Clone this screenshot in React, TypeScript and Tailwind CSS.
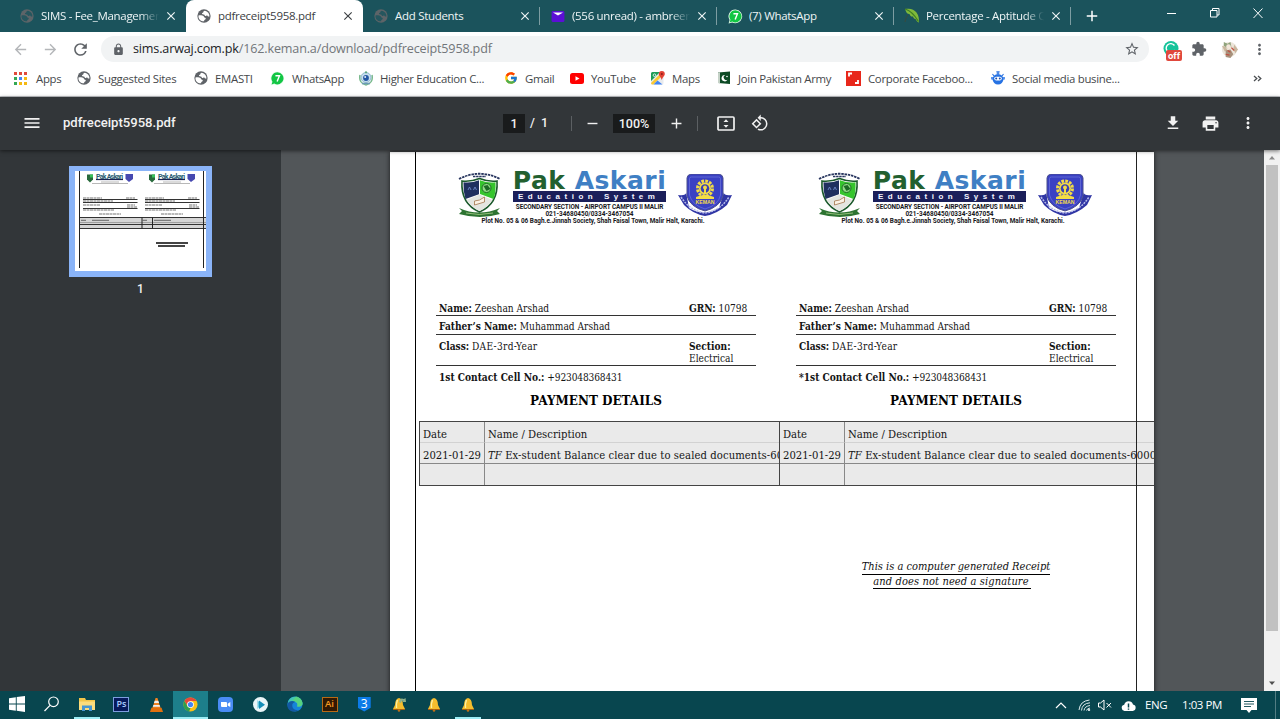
import type { ReactNode } from 'react';
import {
  MdAdd, MdArrowBack, MdArrowForward, MdClose, MdExtension, MdFileDownload, MdLock, MdMenu,
  MdMoreVert, MdPrint, MdRefresh, MdRemove, MdRotate90DegreesCcw, MdStarBorder,
} from 'react-icons/md';
import { FcGoogle } from 'react-icons/fc';

function Globe({ className = 'text-[#5f6368]', land = '#fff' }: { className?: string; land?: string }) {
  return (
    <svg viewBox="0 0 16 16" className={`size-3.5 shrink-0 ${className}`}>
      <circle cx="8" cy="8" r="7.6" fill="currentColor" />
      <path d="M9 2c-1.500.3-2 1-1.800 2-.9.1-1.600.6-1.500 1.400.2.900 1.300.5 2.200.9.900.4.700 1.600 1.700 1.700.9.100 1.200-.9 2-.6.8.4.7 1.300 1.500 1.300h1.100A6.300 6.300 0 0 0 9 2z" fill={land} />
      <path d="M1.700 7.300C4 6.900 6.500 7.200 7.600 8.400c.7.9.5 1.600 1.600 1.600 1.100.2 1 1.500.2 1.900-.9.4-1.200.8-1.300 2.100-3.600.2-6.900-2.600-6.400-6.700z" fill={land} />
    </svg>
  );
}

function WhatsApp() {
  return (
    <svg viewBox="0 0 16 16" className="size-[15px] shrink-0">
      <path d="M8 .5a7.300 7.300 0 1 1-3.500 13.800L.6 15.500l1.100-3.800A7.300 7.300 0 0 1 8 .5z" fill="#e9fbee" />
      <path d="M8 1.300a6.500 6.500 0 1 1-3.400 12.100l-2.900.9.900-2.900A6.500 6.500 0 0 1 8 1.300z" fill="#12c644" />
      <path d="M5.800 5h4.300L7.600 11.200" fill="none" stroke="#fff" strokeWidth="1.500" />
    </svg>
  );
}

function YahooMail() {
  return (
    <svg viewBox="0 0 14 12" className="h-[11px] w-[14px] shrink-0">
      <rect width="14" height="12" rx="1.500" fill="#5b0fd6" />
      <path d="M1.500 1.500h11L7 5z" fill="#fff" />
    </svg>
  );
}

function Leaf() {
  return (
    <svg viewBox="0 0 16 16" className="size-4 shrink-0">
      <path d="M1 1c5-1 9 0 11.500 3.500C15 8 15 11 15 14.500c-2-.5-2.500-2-3.500-3.500-1.500 0-2-1-2.500-2.500-2 .3-3-.7-3.500-2.500C3 6 2 4 1 1z" fill="#7fb93b" />
      <path d="M1 1c4 1 9 5 13.500 12.500" stroke="#3f7f22" strokeWidth="1.200" fill="none" />
      <path d="M4 7c-2 2-2.500 4-3 7" stroke="#3a4a3c" strokeWidth="1" fill="none" />
    </svg>
  );
}

function AppsGrid() {
  const colors = ['#e04b3b', '#e04b3b', '#e04b3b', '#34a853', '#4285f4', '#f5b912', '#34a853', '#f5b912', '#f5b912'];
  return (
    <svg viewBox="0 0 13 13" className="size-[13px] shrink-0">
      {colors.map((c, i) => (
        <rect key={i} x={(i % 3) * 5} y={Math.floor(i / 3) * 5} width="3" height="3" fill={c} />
      ))}
    </svg>
  );
}

function Hec() {
  return (
    <svg viewBox="0 0 14 15" className="h-[15px] w-[14px] shrink-0">
      <path d="M1 4c-1 5 1 9 6 10 5-1 7-5 6-10" fill="none" stroke="#79b98c" strokeWidth="1.500" />
      <circle cx="7" cy="6.500" r="5" fill="#c9dfee" stroke="#6fa3bd" strokeWidth=".7" />
      <circle cx="7" cy="7" r="2.900" fill="#2457a4" />
      <circle cx="6.200" cy="6" r="1" fill="#dfeaf6" />
      <path d="M3 12.500h8" stroke="#6b9bb5" strokeWidth="1.600" />
      <circle cx="7" cy="1.300" r="1.100" fill="#5aa47c" />
    </svg>
  );
}

function YouTube() {
  return (
    <svg viewBox="0 0 14 11" className="h-[11px] w-[14px] shrink-0">
      <rect width="14" height="11" rx="2.500" fill="#f00" />
      <path d="M5.500 3.200v4.600l4-2.300z" fill="#fff" />
    </svg>
  );
}

function Maps() {
  return (
    <svg viewBox="0 0 14 14" className="size-[14px] shrink-0">
      <rect y="1" width="12.500" height="12.500" rx="1.500" fill="#e8eaed" />
      <path d="M1.500 1H9L0 10V2.500A1.500 1.500 0 0 1 1.500 1z" fill="#1e9c57" />
      <path d="M0 12 9 3l2 2-8.500 8.500H1.500A1.500 1.500 0 0 1 0 12z" fill="#fbc934" />
      <path d="M6.500 9.500 2.500 13.500h9z" fill="#4285f4" />
      <circle cx="3.500" cy="4.200" r="1.300" fill="none" stroke="#fff" strokeWidth=".8" />
      <path d="M10.800 0a3 3 0 0 1 3 3c0 2-2.200 2.800-3 6-.8-3.200-3-4-3-6a3 3 0 0 1 3-3z" fill="#e34133" />
      <circle cx="10.800" cy="3" r="1" fill="#8c1d18" />
    </svg>
  );
}

function PakFlag() {
  return (
    <svg viewBox="0 0 14 14" className="size-[14px] shrink-0">
      <path d="M1 1.500 13 .5v12.500L1 12z" fill="#0d4a25" />
      <path d="M1 1.500 3 1.300v11L1 12z" fill="#c5d2c7" />
      <path d="M10.500 8.800A3.200 3.200 0 1 1 8.200 4a2.600 2.600 0 1 0 2.300 4.800z" fill="#fff" />
      <circle cx="10" cy="5.500" r=".8" fill="#fff" />
    </svg>
  );
}

function RedBook() {
  return (
    <svg viewBox="0 0 15 15" className="size-[15px] shrink-0">
      <rect width="15" height="15" fill="#e8271b" />
      <path d="M3 5.500v-3h3M12 9v3H9" stroke="#fff" strokeWidth="1.800" fill="none" />
    </svg>
  );
}

function Robot() {
  return (
    <svg viewBox="0 0 14 14" className="size-[14px] shrink-0">
      <path d="M6.300 3V1.500a1 1 0 1 1 1.400 0V3M1.500 3l1.500 2M12.500 3 11 5" stroke="#2c73df" fill="none" strokeWidth="1.100" />
      <path d="M0 6h14v2.500H0z" fill="#5b96ee" />
      <ellipse cx="7" cy="8.200" rx="5.400" ry="5.300" fill="#2672e3" />
      <rect x="3.200" y="5.800" width="7.600" height="3.600" rx="1.800" fill="#fff" />
      <circle cx="5.200" cy="7.600" r="1" fill="#1b4fae" />
      <circle cx="8.800" cy="7.600" r="1" fill="#1b4fae" />
    </svg>
  );
}

type TabProps = { icon: ReactNode; title: string; active?: boolean; fade?: boolean; divider?: boolean };

function Tab({ icon, title, active, fade, divider }: TabProps) {
  const tone = active ? 'bg-white text-[#3c4043] rounded-t-lg' : 'text-[#eef5f6]';
  return (
    <div className={`relative flex w-[177px] shrink-0 items-center ${tone}`}>
      <span className="flex w-8 shrink-0 justify-center pl-1">{icon}</span>
      <span className={`w-[118px] overflow-hidden text-[11.500px] tracking-[-0.300px] whitespace-nowrap ${fade ? '[mask-image:linear-gradient(to_right,black_84%,transparent)]' : ''}`}>
        {title}
      </span>
      <MdClose className="ml-[5px] size-[14px] shrink-0" />
      {divider && <span className="absolute top-[7px] right-0 h-[18px] w-px bg-[#7d9da2]" />}
    </div>
  );
}

function TabStrip() {
  return (
    <div className="flex h-8 bg-[#1b535c] pl-[9px]">
      <Tab icon={<Globe className="text-[#5d6468]" land="#25565e" />} title="SIMS - Fee_Management" fade />
      <Tab icon={<Globe />} title="pdfreceipt5958.pdf" active />
      <Tab icon={<Globe className="text-[#5d6468]" land="#25565e" />} title="Add Students" divider />
      <Tab icon={<YahooMail />} title="(556 unread) - ambreen" fade divider />
      <Tab icon={<WhatsApp />} title="(7) WhatsApp" divider />
      <Tab icon={<Leaf />} title="Percentage - Aptitude Q" fade divider />
      <MdAdd className="mt-[7px] ml-[12px] size-[18px] text-white" />
      <svg viewBox="0 0 100 14" className="mt-[7px] ml-[62px] h-[14px] w-[100px] shrink-0" fill="none" stroke="#fff">
        <path d="M4 6.500h9M47.500 3.500h6.500v6.500h-6.500zM49.500 3.500v-2h6.500v6.500h-2M90.500 1.500l9 9.500M99.500 1.500l-9 9.500" />
      </svg>
    </div>
  );
}

function AddressBar() {
  return (
    <div className="flex h-[33px] items-center bg-white pt-px text-[#5f6368]">
      <MdArrowBack className="ml-3 size-[17px] text-[#b4b6b9]" />
      <MdArrowForward className="ml-[13px] size-[17px] text-[#b4b6b9]" />
      <MdRefresh className="ml-[12px] size-[19px]" />
      <div className="ml-[11px] flex h-[26px] w-[1048px] items-center rounded-full bg-[#f1f3f4] pl-[11px]">
        <MdLock className="size-[13px]" />
        <span className="ml-2 flex-1 text-[12.600px] tracking-[-0.160px] text-[#72767a]">
          <span className="text-[#202124]">sims.arwaj.com.pk</span>/162.keman.a/download/pdfreceipt5958.pdf
        </span>
        <MdStarBorder className="mr-[9px] size-4" />
      </div>
      <div className="relative ml-[13px] size-[18px]">
        <svg viewBox="0 0 18 18" className="size-[18px]">
          <circle cx="9" cy="8.500" r="7.500" fill="#15c39a" />
          <path d="M12.500 5.500A4.600 4.600 0 1 0 13 10" stroke="#fff" strokeWidth="1.400" fill="none" />
        </svg>
        <span className="absolute top-[10px] left-[4px] rounded-xs bg-[#e0483c] px-[2px] font-[Roboto,sans-serif] text-[9.500px] leading-[11px] font-bold text-white">off</span>
      </div>
      <MdExtension className="ml-[11px] size-[16px]" />
      <svg viewBox="0 0 20 20" className="ml-[13px] size-[19px]">
        <circle cx="10" cy="10" r="8" fill="#ece5da" />
        <path d="M4 2l4 2 3-2 1 5-4 2-4-3z" fill="#8fa37c" />
        <path d="M2 6l4 1 2 4-3 1zM15 5l4 5-3 4-2-5z" fill="#c9b79f" />
        <circle cx="9" cy="7" r="2.500" fill="#f3e6da" />
        <path d="M6 11l5-1 3 5-3 4-5-1z" fill="#a7917c" />
        <path d="M8 11l3 2M6 15l4 1M12 8l3 3" stroke="#c14f3f" strokeWidth="1.300" />
      </svg>
      <MdMoreVert className="ml-[12px] size-[17px]" />
    </div>
  );
}

function Bookmark({ icon, label, className }: { icon: ReactNode; label: string; className: string }) {
  return (
    <div className={`flex shrink-0 items-center gap-[7px] whitespace-nowrap ${className}`}>
      {icon}
      <span>{label}</span>
    </div>
  );
}

function BookmarksBar() {
  return (
    <div className="flex h-[32px] items-center border-b border-[#c4c6c9] bg-white pb-[4px] pl-[14px] text-[11.400px] tracking-[-0.300px] text-[#45484b]">
      <Bookmark className="w-[63px] gap-[9px]" icon={<AppsGrid />} label="Apps" />
      <Bookmark className="w-[117px]" icon={<Globe />} label="Suggested Sites" />
      <Bookmark className="w-[76px]" icon={<Globe />} label="EMASTI" />
      <Bookmark className="w-[89px] gap-[6px]" icon={<WhatsApp />} label="WhatsApp" />
      <Bookmark className="w-[145px] gap-2" icon={<Hec />} label="Higher Education C..." />
      <Bookmark className="w-[66px] gap-2" icon={<FcGoogle className="size-[14px] shrink-0" />} label="Gmail" />
      <Bookmark className="w-[81px] gap-2" icon={<YouTube />} label="YouTube" />
      <Bookmark className="w-[66px] gap-2" icon={<Maps />} label="Maps" />
      <Bookmark className="w-[129px]" icon={<PakFlag />} label="Join Pakistan Army" />
      <Bookmark className="w-[145px]" icon={<RedBook />} label="Corporate Faceboo..." />
      <Bookmark className="w-[262px] gap-2" icon={<Robot />} label="Social media busine..." />
      <svg viewBox="0 0 9 8" className="size-[9px]" fill="none" stroke="#4b4e52" strokeWidth="1.300">
        <path d="M1 1.500 3.800 4 1 6.500M5 1.500 7.800 4 5 6.500" />
      </svg>
    </div>
  );
}

function FitPage() {
  return (
    <svg viewBox="0 0 18 15" className="h-[15px] w-[18px]">
      <rect x="1" y="1" width="16" height="13" rx="1" fill="none" stroke="currentColor" strokeWidth="1.700" />
      <path d="M6.500 6 9 3.200 11.500 6zM6.500 9 9 11.800 11.500 9z" fill="currentColor" />
    </svg>
  );
}

function PdfToolbar() {
  return (
    <div className="relative z-10 flex h-[53px] items-center bg-[#323639] pb-px font-[Roboto,sans-serif] text-[12.500px] font-medium text-[#f1f1f1] shadow-[0_1px_4px_rgba(0,0,0,0.55)]">
      <MdMenu className="ml-[22px] size-5" />
      <span className="ml-[21px] w-[440px] text-[13.100px]">pdfreceipt5958.pdf</span>
      <span className="h-[19px] w-[22px] bg-[#191b1c] text-center leading-[19px]">1</span>
      <span className="ml-[5px] w-[41px]">/&nbsp; 1</span>
      <span className="h-[15px] w-px bg-[#5c6063]" />
      <MdRemove className="ml-[12px] size-[17px]" />
      <span className="ml-[12px] h-[19px] w-[42px] bg-[#191b1c] text-center leading-[19px]">100%</span>
      <MdAdd className="ml-[13px] size-[17px]" />
      <span className="ml-[12px] h-[15px] w-px bg-[#5c6063]" />
      <span className="ml-[19px]"><FitPage /></span>
      <MdRotate90DegreesCcw className="ml-4 size-[18px]" />
      <MdFileDownload className="ml-[395px] size-[18px]" />
      <MdPrint className="ml-[19px] size-[19px]" />
      <MdMoreVert className="ml-[19px] size-[18px]" />
    </div>
  );
}

function Shield() {
  return (
    <svg viewBox="0 0 43 46" className="h-[46px] w-[43px]">
      <path d="M1 8Q21-2.500 42 8" fill="none" stroke="#2a3760" strokeWidth="1.800" strokeDasharray="2.500 .8" />
      <path d="M15 5.500h13" stroke="#2a3760" strokeWidth="1.500" strokeDasharray="2.500 .6" />
      <path d="M4 10q9 1 17.500-2.500Q30 11 39 10c1 15-4 25-17.500 31C8 35 3 25 4 10z" fill="#fff" stroke="#1b5a2c" strokeWidth="1.600" />
      <path d="M5.500 11.300q8 1 15.500-2v14L7.500 28q-2.500-8-2-16.700z" fill="#20305f" />
      <path d="M22 9.300q8 3 15.500 2Q38 22 35.500 28L22 23z" fill="#35c52d" />
      <path d="m21.500 23.500 13 5.500q-4 7-13 11-9-4-13-11z" fill="#e4e6e0" />
      <circle cx="28.500" cy="17" r="4.500" fill="#8fdc84" stroke="#1c6a25" />
      <path d="m25.500 15 4-1 3 4-4 2z" fill="#1c6a25" />
      <path d="m10 19 1.500-3 1.500 3m2.500 0 1.500-3 1.500 3" fill="none" stroke="#6f8ac8" strokeWidth=".9" />
      <path d="m16.500 30 5-1 5-3v5l-10 3z" fill="#fbf3e6" stroke="#a3754b" strokeWidth=".8" />
      <path d="M1 37q20 9 41 0l-3 3 3 3q-20 6-41 0l3-3z" fill="#2d7432" />
      <path d="M8 42q13 3 27 0" fill="none" stroke="#91bd78" strokeWidth="1" />
    </svg>
  );
}

function Keman() {
  return (
    <svg viewBox="0 0 54 42" className="h-[42px] w-[54px]">
      <path d="M0 21q9 1 8-3l3 16q15 9 30 0l5-16q-1 4 8 3l-5 10q-10 9-22 11Q15 40 6 31z" fill="#3036a5" />
      <path d="M3 23q9 14 24 16 15-2 24-16" fill="none" stroke="#b9bdea" strokeWidth="1.500" strokeDasharray="2 1" />
      <path d="M9 4q0 -3 4-4h28q4 1 4 4v18q-3 11-18 15Q12 33 9 22z" fill="#3a41c4" stroke="#4a4f8c" />
      <path d="M11.500 4.500q0-1.500 2-1.500h27q2 0 2 1.500V21q-2 10-15.500 14Q14 31 11.500 21z" fill="none" stroke="#6f76d9" strokeWidth=".7" />
      <circle cx="27" cy="14.500" r="7.500" fill="none" stroke="#f3dc45" strokeWidth="3" strokeDasharray="2.700 1.230" />
      <circle cx="27" cy="14.500" r="6" fill="#f3dc45" />
      <circle cx="27" cy="14.500" r="4.300" fill="#3a41b4" />
      <circle cx="27" cy="13.500" r="2" fill="#f3dc45" />
      <path d="M26 15h2v4h-2zM18 23q9-4 18 0v2H18z" fill="#f3dc45" />
      <text x="27" y="30" textAnchor="middle" fontFamily="Liberation Sans" fontWeight="bold" fontSize="5.200" fill="#f3dc45">KEMAN</text>
    </svg>
  );
}

function Letterhead() {
  return (
    <header className="h-[129px] pt-[19px] font-[Roboto,sans-serif] font-bold whitespace-nowrap text-[#17171c] [font-stretch:normal]">
      <div className="flex h-[45px] items-start pl-[22px]">
        <Shield />
        <div className="ml-[11px] flex w-[155px] flex-col items-center">
          <div className="h-5 font-[DejaVu_Sans,sans-serif] text-[25px] leading-[20px] tracking-[0.500px]">
            <span className="text-[#22602f]">Pak</span> <span className="text-[#3f7fc4]">Askari</span>
          </div>
          <div className="h-[11px] w-[153px] bg-[#1b1f5a] pl-[5px] font-[Liberation_Sans,sans-serif] text-[8px] leading-[11px] tracking-[4.500px] text-[#f4f4ff]">Education System</div>
          <div className="mt-px text-[6.400px] leading-[8px] tracking-[-0.090px]">SECONDARY SECTION - AIRPORT CAMPUS II MALIR</div>
          <div className="text-[6.400px] leading-[6px]">021-34680450/0334-3467054</div>
        </div>
        <div className="mt-[3px] ml-[11px]"><Keman /></div>
      </div>
      <div className="mt-[2px] pr-[6px] text-center text-[6.400px] leading-[6px]">
        Plot No. 05 &amp; 06 Bagh.e.Jinnah Society, Shah Faisal Town, Malir Halt, Karachi.
      </div>
    </header>
  );
}

function Receipt({ phoneLabel }: { phoneLabel: string }) {
  return (
    <section className="w-[360px] shrink-0 px-5">
      <Letterhead />
      <div className="mt-[19px] text-[10.100px] leading-[12px] text-[#151515]">
        <div className="flex h-[16px] items-end border-b border-[#333] pl-[3px]">
          <span className="w-[250px]"><b>Name:</b> Zeeshan Arshad</span>
          <span><b>GRN:</b> 10798</span>
        </div>
        <div className="h-[19px] border-b border-[#333] pt-[5px] pl-[3px]"><b>Father’s Name:</b> Muhammad Arshad</div>
        <div className="flex h-[31px] border-b border-[#333] pt-[6px] pl-[3px]">
          <span className="w-[250px]"><b>Class:</b> <span className="tracking-[0.300px]">DAE-3rd-Year</span></span>
          <span><b>Section:</b><br />Electrical</span>
        </div>
        <div className="pt-[6px] pl-[3px]"><b>{phoneLabel}</b> <span className="tracking-[-0.150px]">+923048368431</span></div>
      </div>
      <h2 className="mt-[8px] text-center text-[12px] leading-[18px] font-bold text-black [font-stretch:normal] font-['DejaVu_Serif',serif]">PAYMENT DETAILS</h2>
    </section>
  );
}

function FeeTable({ className }: { className: string }) {
  return (
    <div className={`grid shrink-0 grid-cols-[65px_1fr] grid-rows-[21px_21px_21px] overflow-hidden border-y border-l border-[#444] bg-[#eaeaea] text-[11.200px] leading-[14px] whitespace-nowrap text-[#151515] ${className}`}>
      <div className="border-r border-b border-r-[#888] border-b-[#d2d2d2] pt-[6px] pl-[3px]">Date</div>
      <div className="border-b border-[#d2d2d2] pt-[6px] pl-[3px]">Name / Description</div>
      <div className="border-r border-b border-[#888] pt-[6px] pl-[3px]">2021-01-29</div>
      <div className="overflow-hidden border-b border-[#888] pt-[6px] pl-[3px] tracking-[0.080px]"><i>TF</i> Ex-student Balance clear due to sealed documents-6000</div>
      <div className="border-r border-[#888]" />
      <div />
    </div>
  );
}

function PdfPage() {
  return (
    <article className="relative mt-[2px] ml-[109px] h-[589px] w-[764px] overflow-hidden bg-white font-['DejaVu_Serif_Condensed','DejaVu_Serif',serif] shadow-[0_0_5px_rgba(0,0,0,0.7)] [font-stretch:condensed]">
      <div className="ml-[25px] h-full border-l border-black">
        <div className="flex">
          <Receipt phoneLabel="1st Contact Cell No.:" />
          <Receipt phoneLabel="*1st Contact Cell No.:" />
        </div>
        <div className="mt-[11px] ml-[3px] flex">
          <FeeTable className="w-[360px]" />
          <FeeTable className="w-[378px]" />
        </div>
        <div className="mt-[74px] ml-[445px] flex w-[190px] flex-col items-center text-[11px] leading-[13px] whitespace-nowrap text-[#111] italic">
          <span className="h-[14.500px] border-b border-black">This is a computer generated Receipt</span>
          <span className="mr-[8px] h-[14px] border-b border-black pr-[2px] tracking-[0.120px]">and does not need a signature</span>
        </div>
      </div>
      <div className="absolute top-0 left-[746px] h-full w-px bg-[#222]" />
    </article>
  );
}

function MiniHalf({ x }: { x: number }) {
  return (
    <g transform={`translate(${x} 0)`}>
      <path d="M0 3.500h6v5l-3 3-3-3z" fill="#286a3c" />
      <path d="M3 3.500h3v3H3z" fill="#38c25a" />
      <text x="9" y="8.200" fontSize="7" fontWeight="bold" fontFamily="Roboto" textLength="27" fill="#2c5f74">Pak Askari</text>
      <path d="M9 8.500h27" stroke="#1b2450" strokeWidth="1.200" />
      <path d="M38.500 3h7.500v5l-4 3-3.500-3z" fill="#4648b0" />
      <path d="M5 12.500h36M14 11h18" stroke="#888" strokeWidth=".6" />
      <path d="M-4 28.500h54.500M-4 31.500h54.500M-4 37.500h54.500" stroke="#333" strokeWidth="1.200" />
      <path d="M-4 27h19m24 0h9M-4 30h30M-4 34h17m27 0h8m-8 2h10M-4 39h31M12 43h22" stroke="#777" strokeWidth="1.100" strokeDasharray="3 .5" />
    </g>
  );
}

function Thumbnail() {
  return (
    <svg viewBox="0 0 131 100" className="h-[100px] w-[131px] bg-white">
      <MiniHalf x={12} />
      <MiniHalf x={74} />
      <path d="M5 47h126v11H5z" fill="#d5d5d5" />
      <path d="M5 46.500h126M5 53.500h126M5 57.500h126" stroke="#333" />
      <path d="M5 51.500h126" stroke="#888" strokeWidth=".7" />
      <path d="M67 46.500v11M77.500 46.500v11" stroke="#222" />
      <path d="M6 49.300h5m6 0h17m33 0h5m7 0h17" stroke="#666" />
      <path d="M81 72h32M83 75h27" stroke="#444" strokeWidth="2" />
      <path d="M4.500 0v97M128.500 0v97" stroke="#222" />
    </svg>
  );
}

function TaskItem({ children, active, open }: { children: ReactNode; active?: boolean; open?: boolean }) {
  return (
    <div className={`flex h-full w-[34.700px] shrink-0 justify-center ${active ? 'bg-[#1d7f8b]' : ''}`}>
      <div className={`flex h-full items-center justify-center border-b-2 ${active ? 'w-full' : 'w-[26px]'} ${active || open ? 'border-[#9cecf5]' : 'border-transparent'}`}>
        {children}
      </div>
    </div>
  );
}

function Bell({ badge }: { badge?: boolean }) {
  return (
    <svg viewBox="0 0 14 15" className="h-[15px] w-[14px]">
      <path d="M7 1q4 1 4 7l2 4H1l2-4q0-6 4-7z" fill="#f5bd2e" />
      <path d="M5.500 3Q4 6 4.500 11" stroke="#fff0a0" strokeWidth="1.400" fill="none" />
      <path d="M1 12h12v1H1z" fill="#a45e12" />
      <circle cx="7" cy="13.500" r="1.300" fill="#bd6f15" />
      {badge && <path d="M7 5q1-5 5-3l1.500-1 .5 4-4 0 1.500-1.200Q9 3 9 6z" fill="#8fb08a" />}
    </svg>
  );
}

function Taskbar() {
  return (
    <footer className="flex h-7 items-center bg-[#08464f] text-white">
      <TaskItem>
        <svg viewBox="0 0 16 16" className="size-4" fill="#fff"><path d="M0 2.200 6.800 1.300v6.200H0zM7.700 1.100 16 0v7.500H7.700zM0 8.400h6.800v6.300L0 13.800zM7.700 8.400H16V16l-8.300-1.200z" /></svg>
      </TaskItem>
      <TaskItem>
        <svg viewBox="0 0 16 16" className="size-4" fill="none" stroke="#fff" strokeWidth="1.200"><circle cx="9.500" cy="5.800" r="4.800" /><path d="M6 9.300.5 15" /></svg>
      </TaskItem>
      <TaskItem open>
        <svg viewBox="0 0 16 14" className="h-[14px] w-4"><path d="M0 1h6l1 2h9v10H0z" fill="#f3c54a" /><path d="M0 4.500h16V13H0z" fill="#fbdc7d" /><path d="M3 14V8.500h10V14h-3v-3H6v3z" fill="#4796d2" /></svg>
      </TaskItem>
      <TaskItem>
        <span className="flex h-[15px] w-4 items-center justify-center border border-[#7d9dde] bg-[#071a5c] text-[9px] font-semibold text-[#a9ccff]">Ps</span>
      </TaskItem>
      <TaskItem>
        <svg viewBox="0 0 14 16" className="h-[15px] w-[13px]"><path d="M6 1h2l3.500 11h-9z" fill="#f08220" /><path d="M5.100 4h3.800l.9 2.500H4.200zM3.700 8.500h6.600l.7 2H3z" fill="#eee" /><path d="M1.500 11.500h11L14 16H0z" fill="#e2700f" /></svg>
      </TaskItem>
      <TaskItem active>
        <svg viewBox="0 0 16 16" className="size-[15px]"><circle cx="8" cy="8" r="7.500" fill="#fbc116" /><path d="M1.500 4.200A7.500 7.500 0 0 1 14.500 4.300H8L5 9.700z" fill="#e5493b" /><path d="M1.500 4.200 5 10l3 1.700-1.500 3.700A7.500 7.500 0 0 1 1.500 4.200z" fill="#2f9e4f" /><circle cx="8" cy="8" r="3.600" fill="#fff" /><circle cx="8" cy="8" r="2.800" fill="#4285f4" /></svg>
      </TaskItem>
      <TaskItem>
        <svg viewBox="0 0 15 15" className="size-[15px]"><rect width="15" height="15" rx="4" fill="#4a8cf5" /><path d="M3 5h5q1 0 1 1v4H4q-1 0-1-1zM9.700 6.800 12.300 5v5L9.700 8.500z" fill="#fff" /></svg>
      </TaskItem>
      <TaskItem>
        <svg viewBox="0 0 15 15" className="size-[15px]"><circle cx="7.500" cy="7.500" r="7.500" fill="#e9f5f8" /><path d="M4.500 3v9L8 7.500z" fill="#61c4dc" /><path d="M6 3.500v8.500l6-4.300z" fill="#168eb8" /></svg>
      </TaskItem>
      <TaskItem>
        <svg viewBox="0 0 16 16" className="size-4"><circle cx="8" cy="8" r="7.600" fill="#1684d8" /><path d="M1 6C3-1 14-1 15.500 7c.3 3-2 4-5.500 3.500 1-2 .5-4-2-4.500-3-.6-5.500.5-7 3z" fill="#42c6b1" /><path d="M9 .5c4 .5 6.500 4 6.500 7 0 2.500-2 3.500-5.500 3 1.500-3-1-6-5-5z" fill="#61d86b" opacity=".7" /><path d="M5.500 8c-1 3 1 6.500 6 6-6 4-12 0-11-6 1-3 5-4 8-2-1.500 0-2.500 1-3 2z" fill="#1259a4" /></svg>
      </TaskItem>
      <TaskItem>
        <span className="flex h-[15px] w-4 items-center justify-center border border-[#b86a16] bg-[#311903] text-[9.500px] font-semibold text-[#f59a22]">Ai</span>
      </TaskItem>
      <TaskItem>
        <span className="flex h-[15px] w-[13px] items-center justify-center bg-[#0c7be8] text-[12px] font-medium [clip-path:polygon(0_0,100%_0,100%_75%,50%_100%,0_75%)]">3</span>
      </TaskItem>
      <TaskItem><Bell badge /></TaskItem>
      <TaskItem><Bell /></TaskItem>
      <TaskItem open><Bell /></TaskItem>
      <div className="ml-auto flex h-full items-center text-[11.500px] tracking-[-0.450px]">
        <svg viewBox="0 0 12 7" className="h-[7px] w-3" fill="none" stroke="#fff" strokeWidth="1.200"><path d="M1 6l5-5 5 5" /></svg>
        <svg viewBox="0 0 13 12" className="ml-[11px] h-3 w-[13px]" fill="none" stroke="#dcebed" strokeWidth="1"><path d="M1 11Q2 2 11.500 1M3.500 11.500Q4 4.500 12 3.800M6 11.500Q6.500 7.300 12 6.500M8.500 11.500Q9 9.500 12 9" /><circle cx="11" cy="11" r=".8" fill="#fff" /></svg>
        <svg viewBox="0 0 14 12" className="ml-[7px] h-3 w-[14px]" fill="none" stroke="#fff" strokeWidth="1"><path d="M.500 4h2L6 1v10L2.500 8h-2zM8.500 4l4.500 4.500M13 4 8.500 8.500" /></svg>
        <svg viewBox="0 0 15 11" className="ml-[9px] h-[11px] w-[15px]"><path d="M3.500 11a3.200 3.200 0 0 1-.3-6.300A4.600 4.600 0 0 1 12 4.500 3.300 3.300 0 0 1 11.800 11z" fill="#fff" /><path d="M7.500 3.500v4M7.500 8.500v1.300" stroke="#08464f" strokeWidth="1.500" /></svg>
        <span className="ml-[9px] w-[37px]">ENG</span>
        <span className="w-[59px]">1:03 PM</span>
        <svg viewBox="0 0 16 15" className="h-[15px] w-4"><path d="M0 0h16v12h-5.500L8 15l-2.500-3H0z" fill="#fff" /><path d="M3 3.500h10M3 6h10M3 8.500h7" stroke="#08464f" strokeWidth=".9" /></svg>
        <span className="ml-[18px] h-full w-[5px] border-l border-[#527d83]" />
      </div>
    </footer>
  );
}

export default function App() {
  return (
    <div className="flex h-[719px] w-[1280px] flex-col overflow-hidden font-['Open_Sans',sans-serif]">
      <TabStrip />
      <AddressBar />
      <BookmarksBar />
      <PdfToolbar />
      <main className="flex h-[541px] shrink-0 bg-[#525659]">
        <aside className="w-[281px] shrink-0 bg-[#323639] pt-4 text-center font-[Roboto,sans-serif] text-[12px] text-[#f1f1f1]">
          <div className="ml-[69px] h-[111px] w-[143px] border-[6px] border-t-[5px] border-[#8ab4f8]"><Thumbnail /></div>
          <div className="mt-[3px] font-medium">1</div>
        </aside>
        <div className="min-w-0 flex-1 overflow-hidden"><PdfPage /></div>
        <div className="flex w-4 shrink-0 flex-col items-center justify-between bg-[#f1f1f1] py-[5px]">
          <svg viewBox="0 0 8 5" className="h-[5px] w-2"><path d="M1 4.500h6L4 1z" fill="#8b8b8b" /></svg>
          <div className="mb-auto mt-[5px] h-[466px] w-3 bg-[#c1c1c1]" />
          <svg viewBox="0 0 8 5" className="h-[5px] w-2"><path d="M1 .5h6L4 4z" fill="#505050" /></svg>
        </div>
      </main>
      <Taskbar />
    </div>
  );
}
